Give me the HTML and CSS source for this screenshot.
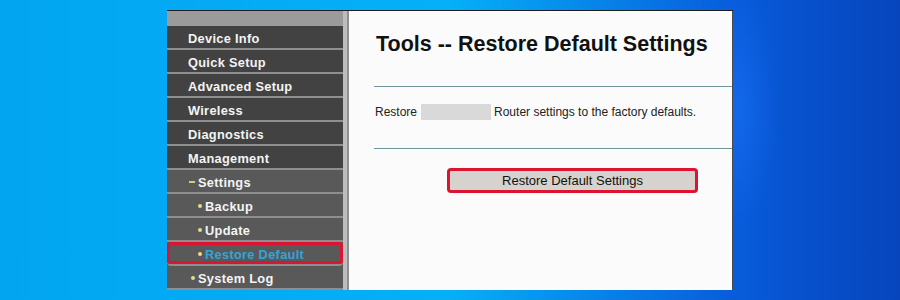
FILE: index.html
```html
<!DOCTYPE html>
<html lang="en">
<head>
    <meta charset="UTF-8">
    <title>Tools -- Restore Default Settings</title>
    <link rel="stylesheet" href="styles.css">
</head>
<body>

    <!-- Router admin window -->
    <div class="shot">

        <!-- Left menu -->
        <nav class="menu">
            <div class="menu-top"></div>
            <a class="item" href="#">Device Info</a>
            <a class="item" href="#">Quick Setup</a>
            <a class="item" href="#">Advanced Setup</a>
            <a class="item" href="#">Wireless</a>
            <a class="item" href="#">Diagnostics</a>
            <a class="item" href="#">Management</a>
            <a class="item open" href="#"><span class="dash"></span>Settings</a>
            <a class="item sub" href="#"><span class="dot"></span>Backup</a>
            <a class="item sub" href="#"><span class="dot"></span>Update</a>
            <a class="item sub active" href="#"><span class="dot"></span>Restore Default</a>
            <a class="item open-item" href="#"><span class="dot"></span>System Log</a>
        </nav>

        <div class="divider"></div>

        <!-- Main panel -->
        <main class="panel">
            <h1>Tools -- Restore Default Settings</h1>
            <hr>
            <p class="desc">Restore <span class="blank"></span> Router settings to the factory defaults.</p>
            <hr>
            <div class="actions">
                <button class="btn">Restore Default Settings</button>
            </div>
        </main>

    </div>

</body>
</html>
```

FILE: styles.css
```css
body {
    margin: 0;
    width: 900px;
    height: 300px;
    overflow: hidden;
    background:
        radial-gradient(ellipse 40px 120px at 738px 110px, rgba(30, 115, 250, 0.5), rgba(30, 115, 250, 0)),
        linear-gradient(to right, #02a6f0 0%, #05b0f8 50%, #085ddc 81%, #0750cc 90%, #0745bc 100%);
    font-family: "Liberation Sans", Arial, sans-serif;
}

.shot {
    display: flex;
    margin: 10px 0 0 167px;
    width: 566px;
    height: 280px;
    border-top: 1px solid #1e1e1e;
    box-sizing: border-box;
    overflow: hidden;
}

/* menu */
.menu {
    width: 176px;
    flex: none;
    background: #585858;
    display: flex;
    flex-direction: column;
}
.menu-top {
    height: 16px;
    background: #9b9b9b;
}
.item {
    display: flex;
    align-items: center;
    height: 20px;
    padding-top: 2px;
    border-bottom: 2px solid #8e8e8e;
    padding-left: 21px;
    background: #424242;
    color: #f4f4f4;
    font-weight: bold;
    font-size: 12.8px;
    letter-spacing: 0.3px;
    text-decoration: none;
    flex: none;
}
.item.open {
    background: #595959;
    padding-left: 22px;
}
.item.sub {
    background: #595959;
    padding-left: 31px;
}
.item.open-item {
    background: #595959;
    padding-left: 24px;
}
.item.active {
    color: #2fa6da;
    border-radius: 4px;
    box-shadow: inset 0 0 0 3px #dc1432;
}
.dash {
    width: 6px;
    height: 2px;
    background: #d9cb7a;
    margin: 0 3px 0 0;
}
.dot {
    width: 4px;
    height: 4px;
    border-radius: 50%;
    background: #e4dc8c;
    margin-right: 3px;
}

.divider {
    width: 4px;
    flex: none;
    background: #bcbcbc;
    border-right: 2px solid #8f8f8f;
}

/* panel */
.panel {
    flex: 1;
    background: #fbfbfb;
    padding: 0 0 0 25px;
    border-right: 1px solid #4a4a4a;
}
h1 {
    margin: 19px 0 0 2px;
    font-size: 21.5px;
    line-height: 28px;
    color: #111;
}
hr {
    margin: 0;
    border: 0;
    border-top: 1px solid #6f9499;
}
h1 + hr {
    margin-top: 28px;
}
.desc {
    display: flex;
    align-items: center;
    margin: 17px 0 28px 1px;
    font-size: 12px;
    color: #222;
}
.blank {
    display: inline-block;
    width: 70px;
    height: 16px;
    background: #d9d9d9;
    margin: 0 3px 0 4px;
}
.actions {
    padding: 19px 0 0 73px;
}
.btn {
    width: 251px;
    height: 25px;
    border: 3px solid #dc1432;
    border-radius: 4px;
    background: #d6d3ce;
    font-family: "Liberation Sans", Arial, sans-serif;
    font-size: 13px;
    color: #111;
    padding: 0;
}
```
